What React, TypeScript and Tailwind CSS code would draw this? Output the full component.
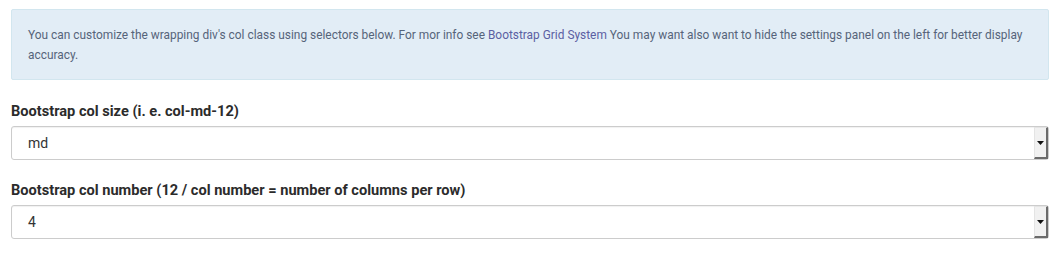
const SelectBox = ({ value }: { value: string }) => {
  return (
    <div className="flex h-[34px] w-[1038px] items-stretch rounded-[3px] border border-[#cccccc] bg-white shadow-[inset_0_1px_1px_rgba(0,0,0,0.06)]">
      <div className="flex flex-1 items-center pl-[16px] text-[14px] text-[#333333]">{value}</div>
      <div className="flex w-[14px] items-center justify-center border-b-2 border-r-2 border-l border-t border-b-[#6b6b6b] border-r-[#6b6b6b] border-l-[#e4e4e4] border-t-[#e4e4e4] bg-[#f1f1f1]">
        <svg width="7" height="4" viewBox="0 0 7 4">
          <path d="M0 0h7L3.5 4z" fill="#111" />
        </svg>
      </div>
    </div>
  );
};

export default function App() {
  return (
    <div className="h-[253px] w-[1063px] bg-white px-[11px] pt-[9px] font-['Roboto',sans-serif]">
      {/* Info alert */}
      <div className="w-[1038px] rounded-[2px] border border-[#d2e6ef] bg-[#e2edf6] px-[16px] pt-[15px] pb-[14px] text-[11.9px] leading-[20px] text-[#56647a]">
        You can customize the wrapping div's col class using selectors below. For mor info see{' '}
        <a className="text-[#5b5fa3]">Bootstrap Grid System</a> You may want also want to hide the settings panel on the
        left for better display accuracy.
      </div>

      <div className="mt-[21px]">
        <label className="block text-[14.6px] font-bold leading-[20px] text-[#2b2b2b]">Bootstrap col size (i. e. col-md-12)</label>
        <div className="mt-[5px]">
          <SelectBox value="md" />
        </div>
      </div>

      <div className="mt-[20px]">
        <label className="block text-[14.6px] font-bold leading-[20px] text-[#2b2b2b]">
          Bootstrap col number (12 / col number = number of columns per row)
        </label>
        <div className="mt-[5px]">
          <SelectBox value="4" />
        </div>
      </div>
    </div>
  );
}
